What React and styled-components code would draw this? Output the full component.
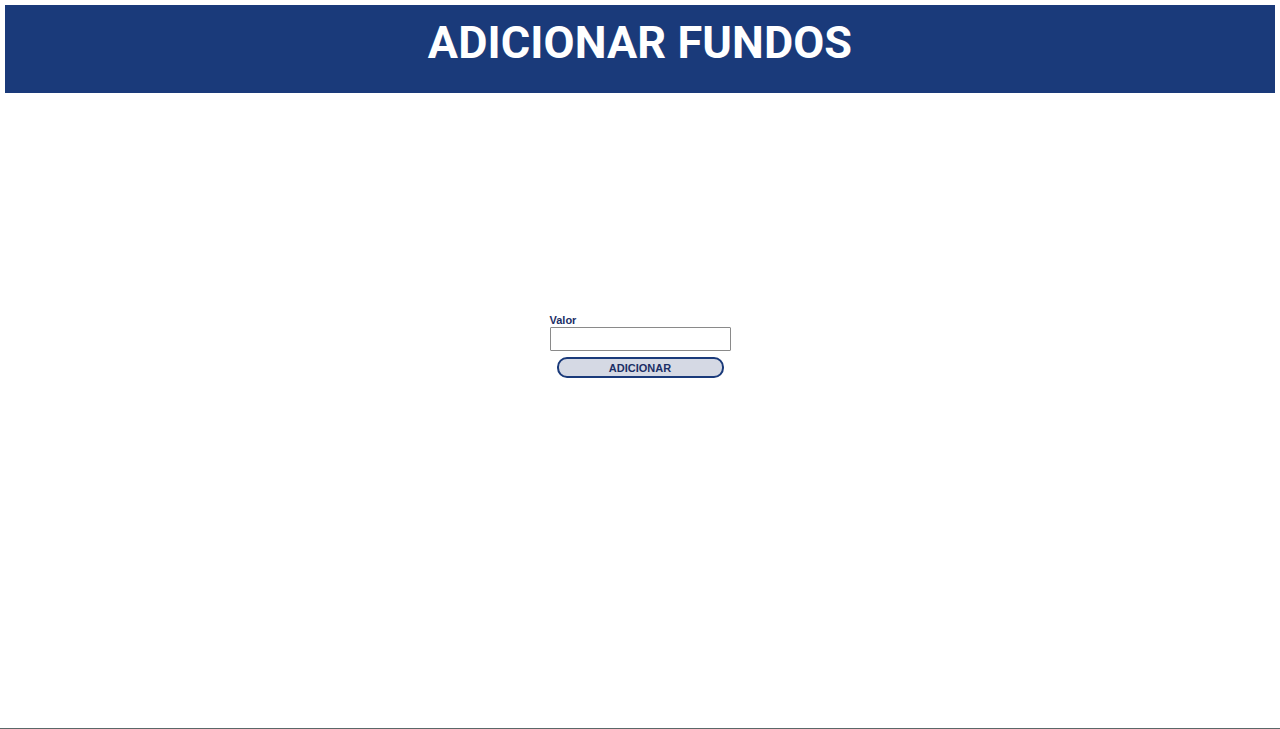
import React, { useState } from "react";
import styled, { createGlobalStyle } from "styled-components";

const GlobalStyle = createGlobalStyle`
  html, body {
    margin: 0;
    padding: 0;
    background: #ffffff;
  }
  body {
    font-family: "Liberation Sans", Arial, sans-serif;
  }
`;

const App = () => {
  const [valor, setValor] = useState("");

  return (
    <>
      <GlobalStyle />
      <Page>
        <Header>
          <Title>ADICIONAR FUNDOS</Title>
        </Header>
        <Main>
          <Form onSubmit={(e) => e.preventDefault()}>
            <Label htmlFor="valor">Valor</Label>
            <Input
              id="valor"
              type="text"
              value={valor}
              onChange={(e) => setValor(e.target.value)}
            />
            <Button type="submit">ADICIONAR</Button>
          </Form>
        </Main>
        <Footer />
      </Page>
    </>
  );
};

const Page = styled.div`
  display: flex;
  flex-direction: column;
  height: 729px;
  padding: 5px 5px 0;
  box-sizing: border-box;
`;

const Header = styled.header`
  display: flex;
  align-items: center;
  justify-content: center;
  height: 88px;
  background: #1a3a7a;
`;

const Title = styled.h1`
  margin: 0 0 14px;
  font-family: Roboto, "Liberation Sans", sans-serif;
  font-size: 45px;
  font-weight: 700;
  color: #ffffff;
  letter-spacing: 0.1px;
`;

const Main = styled.main`
  flex: 1;
  display: flex;
  justify-content: center;
  padding-top: 221px;
`;

const Form = styled.form`
  display: flex;
  flex-direction: column;
  align-items: center;
  width: 181px;
`;

const Label = styled.label`
  align-self: flex-start;
  font-size: 11px;
  font-weight: 700;
  color: #1c2f66;
  line-height: 13px;
`;

const Input = styled.input`
  width: 181px;
  height: 24px;
  box-sizing: border-box;
  border: 1px solid #8a8a8a;
  border-radius: 1px;
  padding: 2px 4px;
  font-size: 12px;
`;

const Button = styled.button`
  margin-top: 6px;
  width: 167px;
  height: 21px;
  box-sizing: border-box;
  border: 2px solid #1a3a7a;
  border-radius: 10px;
  background: #d5d9e4;
  color: #1c2f66;
  font-family: "Liberation Sans", Arial, sans-serif;
  font-size: 11px;
  font-weight: 700;
  padding: 0;
  cursor: pointer;
`;

const Footer = styled.footer`
  height: 1px;
  margin: 0 -5px;
  background: #5a6868;
`;

export default App;
